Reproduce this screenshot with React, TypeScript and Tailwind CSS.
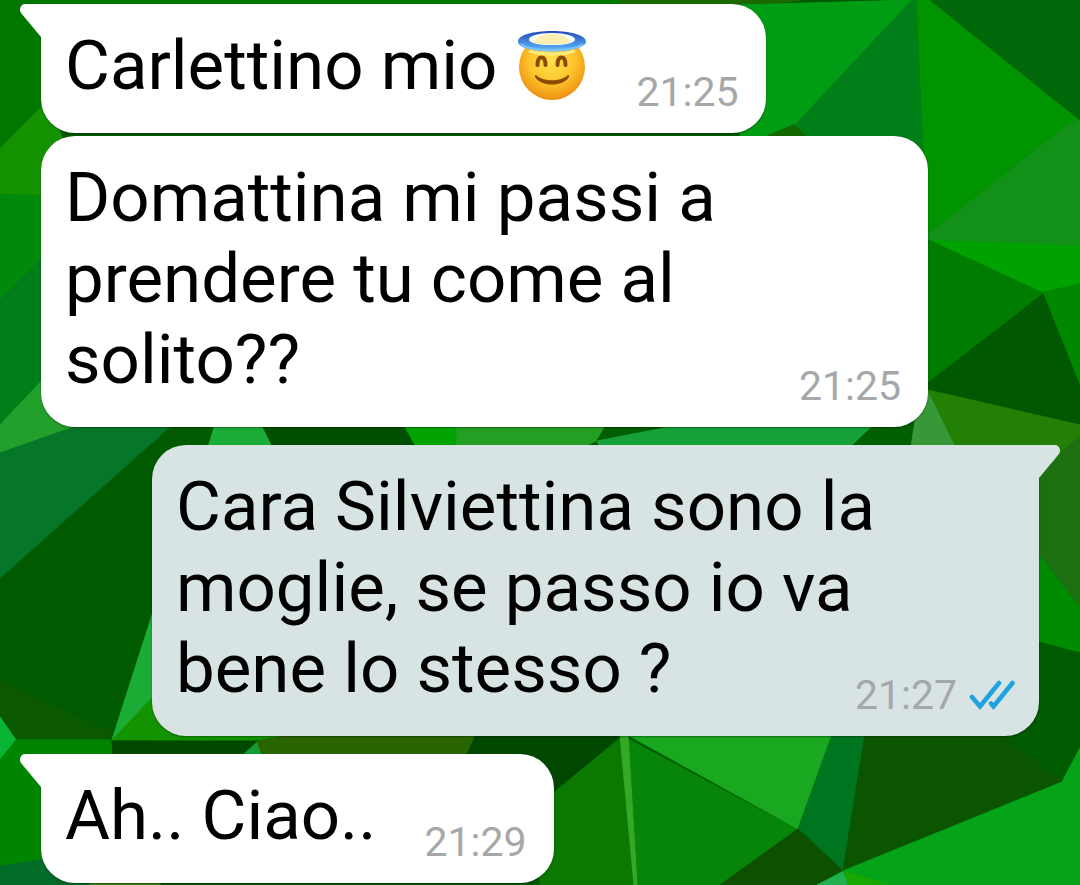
import type { ReactNode } from "react";

type Message = {
  id: number;
  text: ReactNode;
  time: string;
  mine?: boolean;
  tail?: boolean;
  gap: string;
};

const shards = [
  // left edge
  { points: "0,0 620,0 620,60 41,105 0,150", fill: "#007800" },
  { points: "0,149 50,98 80,200 0,194", fill: "#149200" },
  { points: "0,194 80,198 80,290 0,300", fill: "#008a0c" },
  { points: "0,300 80,220 80,345 0,425", fill: "#007d18" },
  { points: "0,425 80,340 160,427 80,427 0,453", fill: "#239f2c" },
  { points: "0,453 80,425 172,425 0,578", fill: "#067628" },
  { points: "0,718 0,680 112,732 112,741 16,741", fill: "#0a5800" },
  { points: "153,612 153,700 112,740", fill: "#1bac35" },
  { points: "112,740 153,697 290,730 290,741", fill: "#149300" },
  { points: "0,717 16,740 0,760", fill: "#08b535" },
  { points: "16,740 112,740 115,885 0,885 0,760", fill: "#008500" },
  { points: "0,866 41,860 150,885 0,885", fill: "#006c28" },
  { points: "90,882 160,882 160,885 90,885", fill: "#38861a" },
  { points: "112,741 270,741 250,770 114,770", fill: "#004800" },
  { points: "244,754 257,742 264,754", fill: "#129a35" },
  { points: "257,741 290,735 476,735 466,760 264,760", fill: "#286500" },
  // between the second and third bubble
  { points: "215,425 262,425 273,447 208,447", fill: "#1cac38" },
  { points: "262,425 404,425 416,447 273,447", fill: "#004f00" },
  { points: "404,425 457,425 457,447 416,447", fill: "#00a300" },
  { points: "457,425 608,425 596,441 584,447 457,447", fill: "#249f24" },
  { points: "606,425 690,425 597,441", fill: "#005f00" },
  { points: "597,441 680,425 874,425 851,447 600,447", fill: "#17a038" },
  { points: "874,425 916,410 911,447 851,447", fill: "#005f00" },
  { points: "920,388 928,390 956,447 911,447", fill: "#379838" },
  // right edge
  { points: "620,0 800,0 760,5 620,20", fill: "#1a6a00" },
  { points: "740,5 912,0 795,125 770,137 740,137", fill: "#009c14" },
  { points: "765,137 795,124 810,137", fill: "#146800" },
  { points: "912,0 917,0 930,180 808,137 795,125", fill: "#007f18" },
  { points: "917,0 932,0 1080,120 1065,127 928,238", fill: "#009400" },
  { points: "930,0 1080,0 1080,120", fill: "#006808" },
  { points: "1065,127 1080,120 1080,248 920,241", fill: "#129018" },
  { points: "920,240 1080,246 1080,286 1043,293", fill: "#00a200" },
  { points: "920,236 1043,293 920,388", fill: "#007d00" },
  { points: "1043,292 1080,284 1080,392", fill: "#008800" },
  { points: "1043,294 1080,386 1080,425 922,389", fill: "#005800" },
  { points: "928,390 1080,425 1080,438 1040,475 956,447", fill: "#228005" },
  { points: "1080,436 1080,608 1035,550 1035,475", fill: "#1d7010" },
  { points: "1035,550 1080,608 1080,652 1035,640", fill: "#008c00" },
  // bottom right
  { points: "476,735 622,735 553,794 460,770", fill: "#004800" },
  { points: "540,804 620,738 637,885 540,885", fill: "#0b7800" },
  { points: "626,738 798,830 720,885 637,885", fill: "#078508" },
  { points: "628,735 833,735 798,829", fill: "#1aa820" },
  { points: "620,735 628,735 637,885 634,885", fill: "#35a825" },
  { points: "832,735 865,735 843,871 798,829", fill: "#007520" },
  { points: "865,735 1000,735 1062,782 843,871", fill: "#0b5500" },
  { points: "798,829 843,871 820,885 720,885", fill: "#0d5000" },
  { points: "843,871 1062,782 1080,748 1080,885 818,885", fill: "#05a318" },
  { points: "843,872 848,885 817,885", fill: "#20b050" },
  { points: "845,872 890,885 848,885", fill: "#18a800" },
];

function Wallpaper() {
  return (
    <svg
      viewBox="0 0 1080 885"
      preserveAspectRatio="none"
      aria-hidden="true"
      className="absolute inset-0 h-full w-full"
    >
      <rect width="1080" height="885" fill="#005a00" />
      {shards.map((s) => (
        <polygon key={s.points} points={s.points} fill={s.fill} stroke={s.fill} strokeLinejoin="round" />
      ))}
    </svg>
  );
}

function HaloEmoji() {
  return (
    <svg
      viewBox="0 0 70 70"
      role="img"
      aria-label="angelo"
      className="mr-px ml-[3px] inline-block size-[70px] align-[-12px]"
    >
      <defs>
        <radialGradient id="face" cx="0.5" cy="0.4" r="0.62">
          <stop offset="0" stopColor="#ffe14d" />
          <stop offset="0.55" stopColor="#fdc52c" />
          <stop offset="1" stopColor="#ee8b10" />
        </radialGradient>
        <linearGradient id="halo" x1="0" y1="0" x2="0" y2="1">
          <stop offset="0" stopColor="#2447b5" />
          <stop offset="0.5" stopColor="#3f86dc" />
          <stop offset="1" stopColor="#67b9f5" />
        </linearGradient>
      </defs>
      <circle cx="35" cy="36" r="33" fill="url(#face)" />
      <ellipse cx="35" cy="10" rx="26" ry="7" fill="#fff" />
      <path d="M16 11c5-6 11-8 19-8s14 2 19 8c-4 3-34 3-38 0Z" fill="#fbeeb0" />
      <path d="M12 20c14 4 32 4 46 0" fill="none" stroke="#fff08a" strokeWidth="3" opacity="0.8" />
      <path
        fillRule="evenodd"
        d="M35 0C16 0 1 4 1 10.500S16 20.500 35 20.500 69 16.500 69 10.500 54 0 35 0Zm0 2c14 0 23 3 23 6.500S49 14 35 14 12 12 12 8.500 21 2 35 2Z"
        fill="url(#halo)"
      />
      <path d="M4 13c5 5 17 6 31 6s26-1 31-6" fill="none" stroke="#79c4fa" strokeWidth="2" />
      <path
        d="M20.500 34c0-5 1.500-7.500 4-7.500s4 2.500 4 7.500M40.500 34c0-5 1.500-7.500 4-7.500s4 2.500 4 7.500"
        fill="none"
        stroke="#8a4a05"
        strokeWidth="4"
        strokeLinecap="round"
      />
      <path d="M19 44c7 7 25 7 32 0 1 0 1.500 1 1 2-6 10-28 10-34 0-.5-1 0-2 1-2Z" fill="#8a4a05" />
    </svg>
  );
}

function Ticks() {
  return (
    <svg
      viewBox="0 0 46 32"
      role="img"
      aria-label="letto"
      className="h-8 w-[46px]"
      fill="none"
      stroke="#1fa2de"
      strokeWidth="4.500"
      strokeLinecap="round"
    >
      <path d="M3 18l8 9.500L30 4M22 24.500l2.500 3L43.500 4" />
    </svg>
  );
}

function Tail({ mine }: { mine?: boolean }) {
  return (
    <svg
      viewBox="0 0 22 33"
      aria-hidden="true"
      className={
        mine
          ? "absolute top-0 -right-[21px] h-[33px] w-[22px] -scale-x-100 text-[#d7e4e3]"
          : "absolute top-0 -left-[21px] h-[33px] w-[22px] text-white"
      }
    >
      <path d="M22 0H5C1 0-1.500 5 1 9l20 24h1Z" fill="currentColor" />
    </svg>
  );
}

function Bubble({ message }: { message: Message }) {
  const { mine, tail, text, time, gap } = message;
  const side = mine ? "self-end bg-[#d7e4e3] pr-6" : "self-start bg-white pr-[27px]";
  const corner = !tail ? "" : mine ? "rounded-tr-none" : "rounded-tl-none";

  return (
    <li
      className={`relative flow-root w-fit max-w-[887px] rounded-[34px] pt-[21px] pb-[17px] pl-6 text-[69px] leading-[81px] text-black shadow-[0_1px_2px_rgba(0,0,0,0.35)] ${side} ${corner} ${gap}`}
    >
      {tail && <Tail mine={mine} />}
      {text}
      {/* floats on the last line, next to the text */}
      <span className="float-right mt-[43px] ml-12 flex items-center gap-3 text-[41px] leading-[48px] text-[#a5a8aa]">
        <time>{time}</time>
        {mine && <Ticks />}
      </span>
    </li>
  );
}

const messages: Message[] = [
  {
    id: 1,
    text: (
      <>
        Carlettino mio <HaloEmoji />
      </>
    ),
    time: "21:25",
    tail: true,
    gap: "",
  },
  { id: 2, text: "Domattina mi passi a prendere tu come al solito??", time: "21:25", gap: "mt-[3px]" },
  {
    id: 3,
    text: "Cara Silviettina sono la moglie, se passo io va bene lo stesso ?",
    time: "21:27",
    mine: true,
    tail: true,
    gap: "mt-[18px]",
  },
  { id: 4, text: "Ah.. Ciao..", time: "21:29", tail: true, gap: "mt-[18px]" },
];

export default function App() {
  return (
    <main className="relative min-h-screen overflow-hidden font-[Roboto,sans-serif]">
      <Wallpaper />
      <ul className="relative flex flex-col px-[41px] pt-1 pb-[2px]">
        {messages.map((m) => (
          <Bubble key={m.id} message={m} />
        ))}
      </ul>
    </main>
  );
}
